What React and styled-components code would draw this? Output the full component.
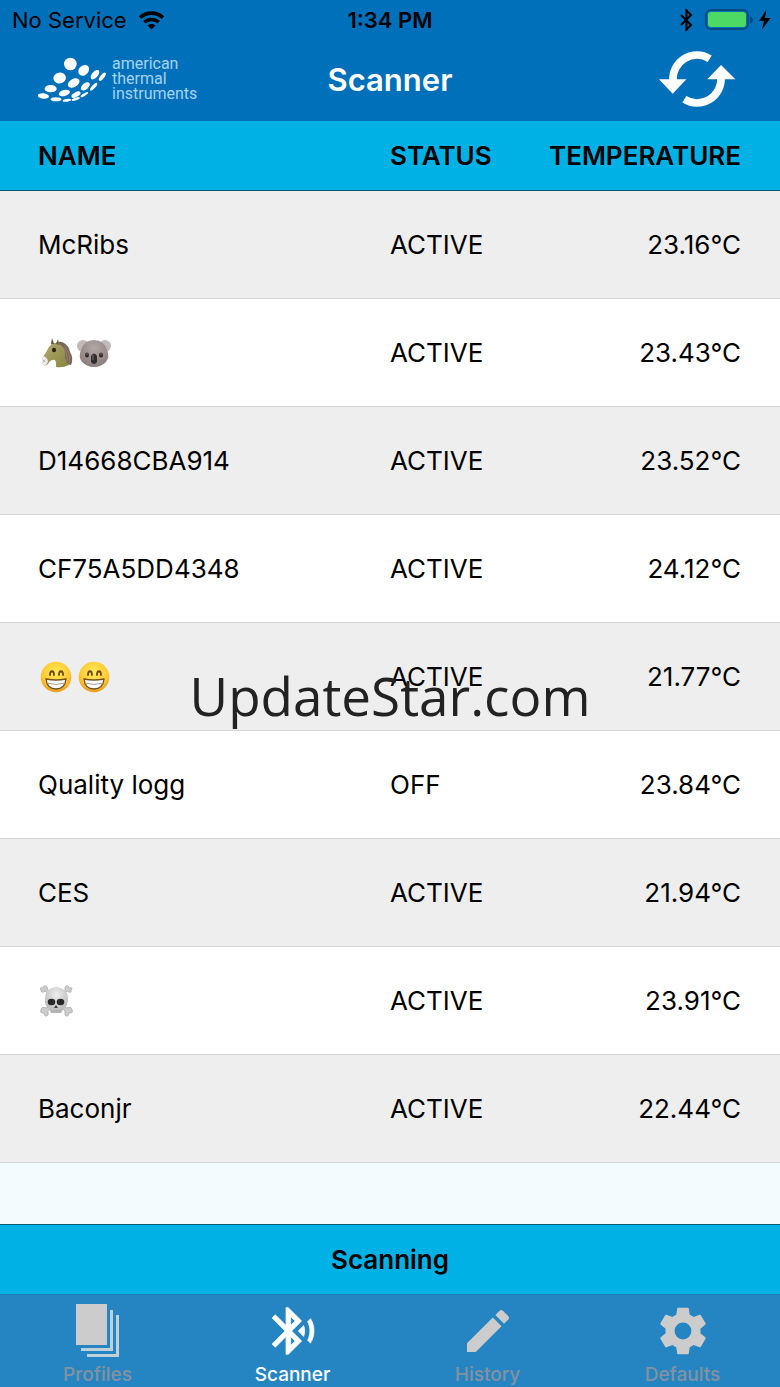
import React from "react";
import styled, { createGlobalStyle } from "styled-components";

const GlobalStyle = createGlobalStyle`
  * { box-sizing: border-box; }
  body {
    margin: 0;
    font-family: Inter, "Liberation Sans", sans-serif;
    color: #000;
    background: #f3fbff;
  }
`;

const Screen = styled.div`
  position: relative;
  display: flex;
  flex-direction: column;
  min-height: 100vh;
`;

const TopArea = styled.header`
  background: #0070bb;
`;

const StatusBar = styled.div`
  display: grid;
  grid-template-columns: 1fr auto 1fr;
  align-items: center;
  height: 40px;
  padding: 0 8px;
  font-size: 22px;
`;

const Carrier = styled.div`
  display: flex;
  align-items: center;
  gap: 11px;
  padding-left: 4px;
`;

const Clock = styled.time`
  font-weight: 600;
`;

const Indicators = styled.div`
  display: flex;
  align-items: center;
  justify-content: flex-end;
`;

const NavBar = styled.div`
  display: grid;
  grid-template-columns: 1fr auto 1fr;
  align-items: center;
  height: 81px;
  padding: 0 38px 2px;
`;

const Logo = styled.div`
  display: flex;
  align-items: center;
  gap: 5px;
  padding-bottom: 2px;
  color: #a6d3ef;
  font: 16px/15px Roboto, "Liberation Sans", sans-serif;
`;

const Title = styled.h1`
  margin: 0;
  font-size: 31px;
  font-weight: 600;
  color: #fff;
`;

const IconButton = styled.button`
  justify-self: end;
  display: flex;
  padding: 0;
  border: 0;
  background: none;
  cursor: pointer;
`;

const DeviceTable = styled.table`
  width: 100%;
  table-layout: fixed;
  border-collapse: separate;
  border-spacing: 0;
  font-size: 26px;
  line-height: 32px;
`;

const Heading = styled.th`
  width: ${(p) => p.$width};
  height: 70px;
  padding: ${(p) => (p.$end ? "0 39px 0 0" : "0 0 0 38px")};
  border-bottom: 1px solid #0d5575;
  background: #00b1e5;
  font-weight: 600;
  text-align: ${(p) => (p.$end ? "right" : "left")};
  white-space: nowrap;
  &:nth-child(2) { padding-left: 0; }
`;

const Row = styled.tr`
  background: #fff;
  &:nth-child(odd) { background: #eee; }
`;

const Cell = styled.td`
  height: 108px;
  padding: ${(p) => (p.$end ? "0 39px 0 0" : "0 0 0 38px")};
  border-bottom: 1px solid #d2d4d5;
  text-align: ${(p) => (p.$end ? "right" : "left")};
  &:nth-child(2) { padding-left: 0; }
`;

const EmojiName = styled.span`
  display: flex;
  gap: 2px;
`;

const Bottom = styled.div`
  margin-top: auto;
`;

const ScanButton = styled.button`
  display: block;
  width: 100%;
  height: 70px;
  padding: 0;
  border: 0;
  border-top: 1px solid #0d5575;
  background: #00b1e5;
  color: #000;
  font: 600 26px Inter, sans-serif;
`;

const TabBar = styled.nav`
  display: grid;
  grid-template-columns: repeat(4, 1fr);
  height: 93px;
  border-top: 1px solid #1b7db8;
  background: #2585c2;
`;

const Tab = styled.a`
  display: flex;
  flex-direction: column;
  align-items: center;
  padding-top: 8px;
  gap: 4px;
  color: ${(p) => (p.$active ? "#fff" : "#8591a0")};
  font-size: 19px;
  font-weight: 500;
  line-height: 24px;
  text-decoration: none;
  svg { fill: ${(p) => (p.$active ? "#fff" : "#ccc")}; }
`;

const Watermark = styled.div`
  position: absolute;
  inset: 0;
  display: flex;
  align-items: center;
  justify-content: center;
  padding-top: 5px;
  color: #222;
  font: 53px/72px "Open Sans", "Noto Sans", sans-serif;
  pointer-events: none;
`;

const Wifi = () => (
  <svg width="27" height="19" viewBox="0 0 27 19" aria-label="Wi-Fi">
    <path d="M2 6.6C8.5.6 18.500.6 25 6.600" fill="none" stroke="#000" strokeWidth="3.600" />
    <path d="M6.300 11.300C10.500 7.500 16.500 7.500 20.700 11.300" fill="none" stroke="#000" strokeWidth="3.400" />
    <path d="M9.500 14.500C12 12.600 15 12.600 17.500 14.500L13.500 18.500Z" />
  </svg>
);

const StatusIcons = () => (
  <svg width="94" height="26" viewBox="0 0 94 26" aria-label="Bluetooth on, battery charging">
    <path d="M3 8L13 18L8.500 22.500V3.500L13 8L3 18" fill="none" stroke="#000" strokeWidth="2" />
    <rect x="28" y="3" width="42" height="19" rx="5" fill="none" stroke="#074b80" strokeWidth="2" />
    <rect x="30" y="5" width="38" height="15" rx="3" fill="#4cd964" />
    <path d="M72 9.500Q75 10.500 75 13T72 16.500Z" fill="#074b80" />
    <path d="M88.500 2.500L81 14H86L84 22.500L92.500 11H87Z" />
  </svg>
);

const dots = [
  [210, 194, 19, 19, 0], [250, 213, 18, 14, -45], [284, 226, 17, 9, -50], [306, 232, 15, 6, -52],
  [178, 236, 19, 16, -10], [220, 251, 19, 12, -30], [255, 261, 16, 9, -40], [280, 262, 15, 5, -48],
  [151, 268, 18, 11, 0], [192, 281, 17, 9, -15], [227, 286, 15, 7, -28], [252, 286, 13, 4, -32],
  [129, 290, 17, 8, 5], [167, 300, 16, 6, 0], [200, 303, 13, 4, -8], [226, 299, 13, 4, -18],
];

const LogoMark = () => (
  <svg width="69" height="46" viewBox="113 170 207 138" fill="#fff" aria-hidden="true">
    {dots.map(([x, y, rx, ry, turn]) => (
      <ellipse key={`${x}-${y}`} cx={x} cy={y} rx={rx} ry={ry} transform={`rotate(${turn} ${x} ${y})`} />
    ))}
  </svg>
);

const Refresh = () => (
  <svg width="84" height="59" viewBox="54 148 252 177" fill="#fff" aria-hidden="true">
    <path d="M209 174A72 72 0 0 0 99 240M133 296A72 72 0 0 0 243 230" fill="none" stroke="#fff" strokeWidth="23" />
    <path d="M57 236H139L98 279ZM202 236H286L243 193Z" />
  </svg>
);

const Horse = () => (
  <svg width="36" height="36" viewBox="0 0 36 36" role="img" aria-label="Horse">
    <defs>
      <linearGradient id="coat" x1="0" y1="0" x2="1" y2="1">
        <stop stopColor="#b5ad73" /><stop offset="1" stopColor="#87853f" />
      </linearGradient>
    </defs>
    <path d="M17 9Q21 5 26 8Q31 11 32 17Q36 23 33 30L26 28L22 12Z" fill="#78665b" />
    <path d="M13 10L14 3L16 8H18L20 4L21 9Q28 13 27 21Q27 26 31 30Q25 33 18 32Q19 28 17 25Q13 24 10 29Q7 32 5 29Q3 26 5 22Q9 16 11 12Z" fill="url(#coat)" />
    <path d="M5 21Q9 22 10 26Q9 31 6 30Q3 29 4 25Z" fill="#ecebea" />
    <path d="M13 9L14 4L16 9M18 9L20 5L21 10" fill="#66594a" />
    <ellipse cx="16" cy="15" rx="2" ry="2.200" fill="#281b12" />
    <circle cx="6" cy="26" r=".8" fill="#887f7a" />
    <path d="M24 11Q30 17 29 27M27 11Q32 18 32 27" fill="none" stroke="#97806e" strokeWidth="1" />
  </svg>
);

const Koala = () => (
  <svg width="36" height="36" viewBox="0 0 36 36" role="img" aria-label="Koala">
    <defs>
      <radialGradient id="fur" cx=".5" cy=".3" r=".8">
        <stop stopColor="#b3a7a5" /><stop offset="1" stopColor="#857877" />
      </radialGradient>
    </defs>
    <circle cx="7" cy="11" r="6" fill="#c0baba" /><circle cx="29" cy="11" r="6" fill="#c0baba" />
    <path d="M5 15Q8 5 18 5T31 15Q34 22 30 27Q25 32 18 32T6 27Q2 22 5 15Z" fill="url(#fur)" />
    <ellipse cx="11" cy="20" rx="2" ry="2.500" fill="#332723" /><ellipse cx="25" cy="20" rx="2" ry="2.500" fill="#332723" />
    <circle cx="11" cy="19" r=".7" fill="#a8827c" /><circle cx="25" cy="19" r=".7" fill="#a8827c" />
    <path d="M15 21Q18 16 21 21L21 27Q18 31 15 27Z" fill="#302b2d" />
    <path d="M17 20V25" stroke="#777" strokeWidth="1" />
  </svg>
);

const Grin = () => (
  <svg width="36" height="36" viewBox="0 0 36 36" role="img" aria-label="Beaming face">
    <defs>
      <radialGradient id="face" cx=".5" cy=".35" r=".65">
        <stop stopColor="#ffed58" /><stop offset=".7" stopColor="#ffc832" /><stop offset="1" stopColor="#e99b1d" />
      </radialGradient>
    </defs>
    <circle cx="18" cy="18" r="15.300" fill="url(#face)" />
    <path d="M12 16C12 11 16 11 16 16M21 16C21 11 25 11 25 16" fill="none" stroke="#704719" strokeWidth="1.800" strokeLinecap="round" />
    <path d="M8 20Q18 22 28 20Q27 30 18 30T8 20Z" fill="#fff" stroke="#765022" strokeWidth="1.300" />
    <path d="M9 24Q18 27 27 24" fill="none" stroke="#aaa08e" strokeWidth="1" />
  </svg>
);

const Skull = () => (
  <svg width="36" height="36" viewBox="0 0 36 36" role="img" aria-label="Skull and crossbones">
    <defs>
      <radialGradient id="bone" cx=".5" cy=".3" r=".7">
        <stop stopColor="#eee" /><stop offset="1" stopColor="#b4b4b4" />
      </radialGradient>
    </defs>
    <g fill="#ccc" stroke="#aaa" strokeWidth=".8">
      <path d="M7 8Q3 11 3 7Q1 4 5 5Q6 1 9 4L10 7L28 25Q34 23 34 27Q36 30 31 30Q30 35 27 32L27 28Z" />
      <path d="M29 8Q34 11 33 7Q36 4 31 5Q30 1 27 4L27 7L9 25Q3 23 3 27Q1 30 6 30Q7 35 10 32L10 28Z" />
    </g>
    <path d="M18 4Q30 5 30 16Q30 23 26 25L23 30H13L11 25Q6 23 7 16Q7 5 18 4Z" fill="url(#bone)" />
    <ellipse cx="13.500" cy="19" rx="3.800" ry="3.300" fill="#292929" /><ellipse cx="22.500" cy="19" rx="3.800" ry="3.300" fill="#292929" />
    <path d="M18 22L16 25H20Z" fill="#3c3c3c" />
    <path d="M13 28H23" stroke="#aaa" strokeWidth=".7" />
  </svg>
);

const Pages = () => (
  <svg width="56" height="56" viewBox="0 0 56 56" aria-hidden="true">
    <path d="M6 1H37V42H6Z" />
    <path d="M40 7H43V48H11V45H40ZM46 12H49V54H17V51H46Z" fill="#c0d0d8" />
  </svg>
);

const MaterialIcon = ({ d, weight = 0 }) => (
  <svg width="56" height="56" viewBox="0 0 24 24" stroke="#fff" strokeWidth={weight} aria-hidden="true"><path d={d} /></svg>
);

const bluetooth = "M14.24 12.01l2.32 2.32c.28-.72.44-1.51.44-2.33 0-.82-.16-1.59-.43-2.31l-2.33 2.32zm5.29-5.3l-1.26 1.26c.63 1.21.98 2.57.98 4.02s-.36 2.82-.98 4.02l1.2 1.2c.97-1.54 1.54-3.36 1.54-5.31-.01-1.89-.55-3.67-1.48-5.19zm-3.82 1L10 2H9v7.59L4.41 5 3 6.41 8.59 12 3 17.59 4.41 19 9 14.41V22h1l5.71-5.71-4.3-4.29 4.3-4.29zM11 5.83l1.88 1.88L11 9.59V5.83zm1.88 10.46L11 18.17v-3.76l1.88 1.88z";
const pencil = "M3 17.25V21h3.75L17.81 9.94l-3.75-3.75L3 17.25zM20.71 7.04c.39-.39.39-1.02 0-1.41l-2.34-2.34c-.39-.39-1.02-.39-1.41 0l-1.83 1.83 3.75 3.75 1.83-1.83z";
const gear = "M19.43 12.98c.04-.32.07-.64.07-.98s-.03-.66-.07-.98l2.11-1.65c.19-.15.24-.42.12-.64l-2-3.46c-.12-.22-.39-.3-.61-.22l-2.49 1c-.52-.4-1.08-.73-1.69-.98l-.38-2.65C14.46 2.18 14.25 2 14 2h-4c-.25 0-.46.18-.49.42l-.38 2.65c-.61.25-1.17.59-1.69.98l-2.49-1c-.23-.09-.49 0-.61.22l-2 3.46c-.13.22-.07.49.12.64l2.11 1.65c-.04.32-.07.65-.07.98s.03.66.07.98l-2.11 1.65c-.19.15-.24.42-.12.64l2 3.46c.12.22.39.3.61.22l2.49-1c.52.4 1.08.73 1.69.98l.38 2.65c.03.24.24.42.49.42h4c.25 0 .46-.18.49-.42l.38-2.65c.61-.25 1.17-.59 1.69-.98l2.49 1c.23.09.49 0 .61-.22l2-3.46c.12-.22.07-.49-.12-.64l-2.11-1.65zM12 15.6a3.6 3.6 0 1 1 0-7.2 3.6 3.6 0 0 1 0 7.2z";

const devices = [
  { id: 1, name: "McRibs", status: "ACTIVE", temperature: "23.16°C" },
  { id: 2, name: <EmojiName><Horse /><Koala /></EmojiName>, status: "ACTIVE", temperature: "23.43°C" },
  { id: 3, name: "D14668CBA914", status: "ACTIVE", temperature: "23.52°C" },
  { id: 4, name: "CF75A5DD4348", status: "ACTIVE", temperature: "24.12°C" },
  { id: 5, name: <EmojiName><Grin /><Grin /></EmojiName>, status: "ACTIVE", temperature: "21.77°C" },
  { id: 6, name: "Quality logg", status: "OFF", temperature: "23.84°C" },
  { id: 7, name: "CES", status: "ACTIVE", temperature: "21.94°C" },
  { id: 8, name: <EmojiName><Skull /></EmojiName>, status: "ACTIVE", temperature: "23.91°C" },
  { id: 9, name: "Baconjr", status: "ACTIVE", temperature: "22.44°C" },
];

export default function App() {
  return (
    <Screen>
      <GlobalStyle />
      <TopArea>
        <StatusBar>
          <Carrier>No Service <Wifi /></Carrier>
          <Clock>1:34 PM</Clock>
          <Indicators><StatusIcons /></Indicators>
        </StatusBar>
        <NavBar>
          <Logo>
            <LogoMark />
            <span>american<br />thermal<br />instruments</span>
          </Logo>
          <Title>Scanner</Title>
          <IconButton type="button" aria-label="Refresh"><Refresh /></IconButton>
        </NavBar>
      </TopArea>
      <DeviceTable>
        <thead>
          <tr>
            <Heading $width="50%">NAME</Heading>
            <Heading $width="18%">STATUS</Heading>
            <Heading $width="32%" $end>TEMPERATURE</Heading>
          </tr>
        </thead>
        <tbody>
          {devices.map((device) => (
            <Row key={device.id}>
              <Cell>{device.name}</Cell>
              <Cell>{device.status}</Cell>
              <Cell $end>{device.temperature}</Cell>
            </Row>
          ))}
        </tbody>
      </DeviceTable>
      <Bottom>
        <ScanButton type="button">Scanning</ScanButton>
        <TabBar>
          <Tab href="#profiles"><Pages />Profiles</Tab>
          <Tab href="#scanner" $active aria-current="page"><MaterialIcon d={bluetooth} weight={0.3} />Scanner</Tab>
          <Tab href="#history"><MaterialIcon d={pencil} />History</Tab>
          <Tab href="#defaults"><MaterialIcon d={gear} />Defaults</Tab>
        </TabBar>
      </Bottom>
      <Watermark>UpdateStar.com</Watermark>
    </Screen>
  );
}
